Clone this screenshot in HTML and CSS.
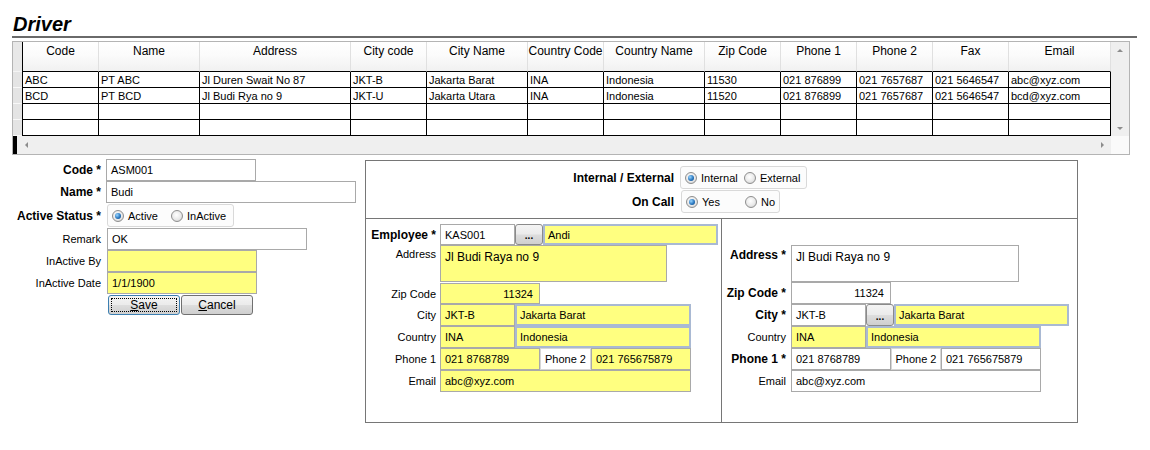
FILE: index.html
```html
<!DOCTYPE html>
<html>
<head>
<meta charset="utf-8">
<title>Driver</title>
<link rel="stylesheet" href="styles.css">
</head>
<body>
<div class="page">
  <h1 class="title">Driver</h1>
  <div class="rule"></div>

  <div class="grid">
    <div class="grid-main">
      <div class="rowhdr">
        <div class="rh-top"></div>
        <div class="rh"></div>
        <div class="rh"></div>
        <div class="rh"></div>
        <div class="rh"></div>
      </div>
      <table class="data">
        <colgroup>
          <col class="c76"><col class="c101"><col class="c151"><col class="c76"><col class="c101"><col class="c76">
          <col class="c101"><col class="c76"><col class="c76"><col class="c76"><col class="c76"><col class="c102">
        </colgroup>
        <thead>
          <tr><th>Code</th><th>Name</th><th>Address</th><th>City code</th><th>City Name</th><th>Country Code</th><th>Country Name</th><th>Zip Code</th><th>Phone 1</th><th>Phone 2</th><th>Fax</th><th>Email</th></tr>
        </thead>
        <tbody>
          <tr><td>ABC</td><td>PT ABC</td><td>Jl Duren Swait No 87</td><td>JKT-B</td><td>Jakarta Barat</td><td>INA</td><td>Indonesia</td><td>11530</td><td>021 876899</td><td>021 7657687</td><td>021 5646547</td><td>abc@xyz.com</td></tr>
          <tr><td>BCD</td><td>PT BCD</td><td>Jl Budi Rya no 9</td><td>JKT-U</td><td>Jakarta Utara</td><td>INA</td><td>Indonesia</td><td>11520</td><td>021 876899</td><td>021 7657687</td><td>021 5646547</td><td>bcd@xyz.com</td></tr>
          <tr><td></td><td></td><td></td><td></td><td></td><td></td><td></td><td></td><td></td><td></td><td></td><td></td></tr>
          <tr><td></td><td></td><td></td><td></td><td></td><td></td><td></td><td></td><td></td><td></td><td></td><td></td></tr>
        </tbody>
      </table>
      <div class="vscroll"><span class="arr up"></span><span class="arr down"></span></div>
    </div>
    <div class="hscroll">
      <span class="blk"></span>
      <div class="hbar"><span class="arr left"></span><span class="arr right"></span></div>
      <span class="corner"></span>
    </div>
  </div>

  <div class="bottom">
    <div class="leftform">
      <div class="lbl b">Code *</div>
      <div class="fld w150">ASM001</div>

      <div class="lbl b">Name *</div>
      <div class="fld w250">Budi</div>

      <div class="lbl b">Active Status *</div>
      <div class="rg rg-status">
        <span class="ro"><span class="rc on"></span>Active</span>
        <span class="ro"><span class="rc"></span>InActive</span>
      </div>

      <div class="lbl">Remark</div>
      <div class="fld w200 ml1">OK</div>

      <div class="lbl">InActive By</div>
      <div class="fld y w150 ml1"></div>

      <div class="lbl">InActive Date</div>
      <div class="fld y w150 ml1">1/1/1900</div>

      <div class="btns">
        <div class="btn focus"><span><u>S</u>ave</span></div>
        <div class="btn"><span><u>C</u>ancel</span></div>
      </div>
    </div>

    <div class="panel">
      <div class="ptop">
        <div class="prow">
          <div class="lbl b">Internal / External</div>
          <div class="rg rg-int">
            <span class="ro"><span class="rc on"></span>Internal</span>
            <span class="ro"><span class="rc"></span>External</span>
          </div>
        </div>
        <div class="prow">
          <div class="lbl b">On Call</div>
          <div class="rg rg-call">
            <span class="ro"><span class="rc on"></span>Yes</span>
            <span class="ro"><span class="rc"></span>No</span>
          </div>
        </div>
      </div>

      <div class="pbot">
        <div class="sub subl">
          <div class="lbl b">Employee *</div>
          <div class="cell">
            <div class="fld w75">KAS001</div>
            <div class="dots">...</div>
            <div class="fld y bl w175">Andi</div>
          </div>

          <div class="lbl top">Address</div>
          <div class="cell">
            <div class="fld y ta w227">Jl Budi Raya no 9</div>
          </div>

          <div class="lbl">Zip Code</div>
          <div class="cell"><div class="fld y num w100">11324</div></div>

          <div class="lbl">City</div>
          <div class="cell">
            <div class="fld y w75">JKT-B</div>
            <div class="fld y bl w176">Jakarta Barat</div>
          </div>

          <div class="lbl">Country</div>
          <div class="cell">
            <div class="fld y w75">INA</div>
            <div class="fld y bl w176">Indonesia</div>
          </div>

          <div class="lbl">Phone 1</div>
          <div class="cell">
            <div class="fld y w100">021 8768789</div>
            <div class="fld lblbox w51">Phone 2</div>
            <div class="fld y w100">021 765675879</div>
          </div>

          <div class="lbl">Email</div>
          <div class="cell"><div class="fld y w251">abc@xyz.com</div></div>
        </div>

        <div class="sub subr">
          <div class="lbl b top">Address *</div>
          <div class="cell"><div class="fld ta w228">Jl Budi Raya no 9</div></div>

          <div class="lbl b">Zip Code *</div>
          <div class="cell"><div class="fld num w100">11324</div></div>

          <div class="lbl b">City *</div>
          <div class="cell">
            <div class="fld w75">JKT-B</div>
            <div class="dots">...</div>
            <div class="fld y bl w175">Jakarta Barat</div>
          </div>

          <div class="lbl">Country</div>
          <div class="cell">
            <div class="fld y w75">INA</div>
            <div class="fld y bl w175">Indonesia</div>
          </div>

          <div class="lbl b">Phone 1 *</div>
          <div class="cell">
            <div class="fld w100">021 8768789</div>
            <div class="fld lblbox w50">Phone 2</div>
            <div class="fld w100">021 765675879</div>
          </div>

          <div class="lbl">Email</div>
          <div class="cell"><div class="fld w250">abc@xyz.com</div></div>
        </div>
      </div>
    </div>
  </div>
</div>
</body>
</html>
```
FILE: styles.css
```css
* { box-sizing: border-box; }
html, body { margin: 0; padding: 0; background: #fff; }
body {
  font-family: "Liberation Sans", Arial, sans-serif;
  font-size: 11px;
  color: #000;
}
.page { width: 1150px; height: 450px; padding-top: 13px; overflow: hidden; }

.title {
  margin: 0 0 0 13px;
  height: 22px;
  font-size: 20px;
  line-height: 22px;
  font-weight: bold;
  font-style: italic;
}
.rule { margin: 1px 0 0 12px; width: 1125px; height: 2px; background: #6a6a6a; }

/* ---------- grid ---------- */
.grid {
  margin: 3px 0 0 12px;
  width: 1118px;
  border: 1px solid #b4b4b4;
}
.grid-main { display: flex; height: 94px; }
.rowhdr {
  width: 10px;
  border-right: 1px solid #000;
  background: #e4e4e4;
  display: flex;
  flex-direction: column;
}
.rh-top { height: 30px; border-bottom: 1px solid #f4f4f4; background: #e8e8e8; }
.rh { height: 16px; border-bottom: 1px solid #f8f8f8; }

.data {
  width: 1088px;
  table-layout: fixed;
  border-collapse: separate;
  border-spacing: 0;
}
.c76 { width: 76px; }
.c101 { width: 101px; }
.c151 { width: 151px; }
.c102 { width: 102px; }
.data th {
  height: 30px;
  padding: 2px 0 0;
  vertical-align: top;
  font-weight: normal;
  font-size: 12px;
  line-height: 14px;
  text-align: center;
  white-space: nowrap;
  overflow: hidden;
  background: linear-gradient(#ffffff 0%, #fbfbfb 45%, #f1f1f1 100%);
  border-right: 1px solid #e0e0e0;
  border-bottom: 1px solid #000;
}
.data td {
  height: 16px;
  padding: 2px 2px 0;
  vertical-align: top;
  font-size: 11px;
  line-height: 13px;
  white-space: nowrap;
  overflow: hidden;
  border-right: 1px solid #000;
  border-bottom: 1px solid #000;
}
.vscroll {
  width: 18px;
  background: #efefef;
  display: flex;
  flex-direction: column;
  justify-content: space-between;
  align-items: center;
  padding: 7px 0 6px;
}
.hscroll { display: flex; height: 18px; }
.blk { width: 4px; background: #000; }
.hbar {
  flex: 1;
  background: #efefef;
  display: flex;
  justify-content: space-between;
  align-items: center;
  padding: 0 7px 0 8px;
}
.corner { width: 18px; background: #fafafa; }
.arr { width: 0; height: 0; display: block; }
.arr.up { border-left: 3px solid transparent; border-right: 3px solid transparent; border-bottom: 3px solid #8c8c8c; }
.arr.down { border-left: 3px solid transparent; border-right: 3px solid transparent; border-top: 3px solid #8c8c8c; }
.arr.left { border-top: 3px solid transparent; border-bottom: 3px solid transparent; border-right: 3px solid #8c8c8c; }
.arr.right { border-top: 3px solid transparent; border-bottom: 3px solid transparent; border-left: 3px solid #8c8c8c; }

/* ---------- bottom area ---------- */
.bottom { display: flex; margin-top: 4px; }

.lbl {
  text-align: right;
  align-self: center;
  white-space: nowrap;
  font-size: 11px;
}
.lbl.b { font-weight: bold; font-size: 12px; }
.lbl.top { align-self: start; padding-top: 3px; }

.leftform {
  width: 365px;
  display: grid;
  grid-template-columns: 104px auto;
  grid-template-rows: 22px 22px 25px 22px 22px 22px 21px;
  column-gap: 2px;
  align-content: start;
}
.leftform .lbl { padding-right: 3px; }
.leftform .fld { justify-self: start; }
.ml1 { margin-left: 1px; }

.fld {
  height: 100%;
  border: 1px solid #a9a9a9;
  background: #fff;
  padding: 0 4px;
  display: flex;
  align-items: center;
  white-space: nowrap;
  overflow: hidden;
  font-size: 11px;
  flex: none;
}
.fld.y { background: #ffff80; }
.fld.bl { border: 2px solid #a9b9d3; padding-left: 3px; }
.fld.ta { height: 37px; align-items: flex-start; padding-top: 4px; font-size: 12px; }
.fld.num { justify-content: flex-end; padding-right: 6px; }
.fld.lblbox { border-color: #d6d6d6; justify-content: center; padding: 0 2px; }

.w50 { width: 50px; }
.w51 { width: 51px; }
.w75 { width: 75px; }
.w100 { width: 100px; }
.w150 { width: 150px; }
.w175 { width: 175px; }
.w176 { width: 176px; }
.w200 { width: 200px; }
.w227 { width: 227px; }
.w228 { width: 228px; }
.w250 { width: 250px; }
.w251 { width: 251px; }

/* radio groups */
.rg {
  display: flex;
  align-items: center;
  height: 23px;
  border: 1px solid #d9d9d9;
  border-radius: 3px;
  background: #fcfcfc;
  padding-left: 4px;
  justify-self: start;
  font-size: 11px;
}
.rg-status { width: 127px; margin-top: 1px; margin-left: 1px; }
.rg-int { width: 127px; }
.rg-call { width: 99px; margin-left: 1px; }
.ro { display: flex; align-items: center; gap: 4px; width: 59px; flex: none; }
.rc {
  width: 12px;
  height: 12px;
  border-radius: 50%;
  border: 1px solid #8e8e8e;
  background: radial-gradient(circle at 45% 40%, #ffffff 0%, #e9e9e9 55%, #c4c4c4 100%);
  display: flex;
  align-items: center;
  justify-content: center;
  flex: none;
}
.rc.on::after {
  content: "";
  width: 6px;
  height: 6px;
  border-radius: 50%;
  background: radial-gradient(circle at 35% 35%, #9ad6ff 0%, #2a78c0 55%, #0c3f78 100%);
}

/* buttons */
.btns { grid-column: 2; display: flex; gap: 1px; margin: 1px 0 0 2px; }
.btn {
  width: 72px;
  height: 20px;
  border: 1px solid #707070;
  border-radius: 3px;
  background: linear-gradient(#f4f4f4 0%, #ebebeb 48%, #dddddd 52%, #cfcfcf 100%);
  display: flex;
  align-items: center;
  justify-content: center;
  font-size: 12px;
}
.btn.focus {
  border-color: #3c7fb1;
  outline: 1px dotted #000;
  outline-offset: -4px;
}
.dots {
  width: 28px;
  height: 100%;
  border: 1px solid #8a8a8a;
  border-radius: 3px;
  background: linear-gradient(#f4f4f4 0%, #ebebeb 48%, #dddddd 52%, #cfcfcf 100%);
  display: flex;
  align-items: flex-end;
  justify-content: center;
  padding-bottom: 4px;
  font-size: 10px;
  font-weight: bold;
  line-height: 8px;
  flex: none;
}

/* panel */
.panel {
  width: 713px;
  height: 263px;
  margin-top: 1px;
  border: 1px solid #767676;
  display: flex;
  flex-direction: column;
}
.ptop {
  height: 58px;
  border-bottom: 1px solid #767676;
  padding-top: 5px;
  display: flex;
  flex-direction: column;
  gap: 1px;
}
.prow { display: grid; grid-template-columns: 308px auto; column-gap: 6px; height: 23px; }
.pbot { flex: 1; display: flex; }
.sub { display: grid; align-content: start; }
.subl {
  width: 356px;
  border-right: 1px solid #767676;
  padding-top: 5px;
  grid-template-columns: 70px auto;
  grid-template-rows: 21px 38px 21px 22px 22px 22px 22px;
  column-gap: 4px;
}
.subr {
  flex: 1;
  padding-top: 26px;
  grid-template-columns: 64px auto;
  grid-template-rows: 37px 22px 22px 22px 22px 22px;
  column-gap: 5px;
}
.cell { display: flex; height: 100%; }
```
